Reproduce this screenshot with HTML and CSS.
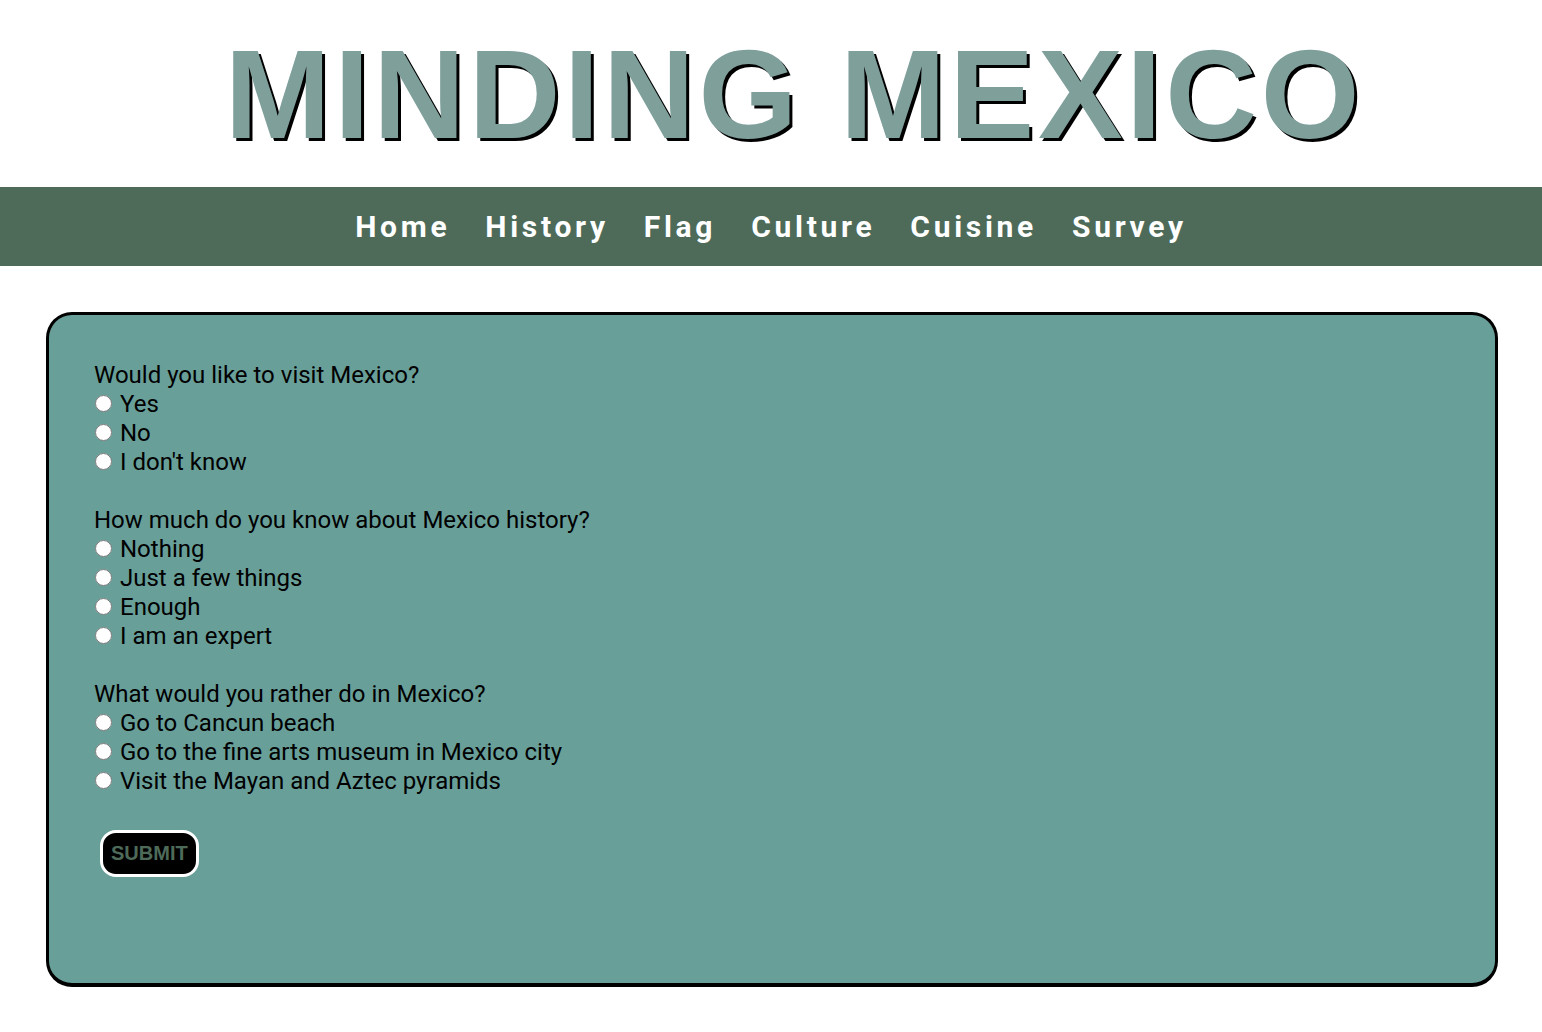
FILE: index.html
```html
<!DOCTYPE html>
<html lang="en">
<head>
<meta charset="utf-8">
<title>Minding Mexico - Survey</title>
<link rel="stylesheet" href="styles.css">
</head>
<body>
<header class="site-header">
  <h1 class="title">MINDING MEXICO</h1>
</header>
<nav class="nav">
  <a href="#">Home</a>
  <a href="#">History</a>
  <a href="#">Flag</a>
  <a href="#">Culture</a>
  <a href="#">Cuisine</a>
  <a href="#">Survey</a>
</nav>
<main class="main">
  <form class="survey">
    <fieldset class="group">
      <div class="question">Would you like to visit Mexico?</div>
      <label class="option"><input type="radio" name="visit"> Yes</label>
      <label class="option"><input type="radio" name="visit"> No</label>
      <label class="option"><input type="radio" name="visit"> I don't know</label>
    </fieldset>
    <fieldset class="group">
      <div class="question">How much do you know about Mexico history?</div>
      <label class="option"><input type="radio" name="hist"> Nothing</label>
      <label class="option"><input type="radio" name="hist"> Just a few things</label>
      <label class="option"><input type="radio" name="hist"> Enough</label>
      <label class="option"><input type="radio" name="hist"> I am an expert</label>
    </fieldset>
    <fieldset class="group">
      <div class="question">What would you rather do in Mexico?</div>
      <label class="option"><input type="radio" name="do"> Go to Cancun beach</label>
      <label class="option"><input type="radio" name="do"> Go to the fine arts museum in Mexico city</label>
      <label class="option"><input type="radio" name="do"> Visit the Mayan and Aztec pyramids</label>
    </fieldset>
    <button type="button" class="submit">SUBMIT</button>
  </form>
</main>
</body>
</html>
```
FILE: styles.css
```css
html, body {
  margin: 0;
  padding: 0;
  background: #ffffff;
}
body {
  font-family: Roboto, "Liberation Sans", sans-serif;
}
.site-header {
  height: 187px;
  display: flex;
  align-items: flex-start;
  justify-content: center;
  padding-left: 46px;
  box-sizing: border-box;
}
.title {
  margin: 22px 0 0;
  font-family: "Liberation Sans", Arial, sans-serif;
  font-weight: 700;
  font-size: 127px;
  line-height: 144px;
  letter-spacing: 3.7px;
  color: #7f9f9b;
  text-shadow: 3px 3px 0 #000;
}
.nav {
  background: #4e6b5a;
  height: 79px;
  display: flex;
  justify-content: center;
  align-items: center;
  gap: 35px;
}
.nav a {
  color: #ffffff;
  text-decoration: none;
  font-family: Roboto, sans-serif;
  font-weight: 700;
  font-size: 30px;
  letter-spacing: 3.7px;
}
.main {
  padding: 46px 44px 46px 46px;
}
.survey {
  background: #699f99;
  border: 3px solid #000;
  border-bottom-width: 4px;
  border-radius: 26px;
  padding: 46px 45px 106px;
  font-size: 24px;
  line-height: 29px;
  color: #000;
}
.group {
  border: 0;
  margin: 0 0 29px;
  padding: 0;
  display: flex;
  flex-direction: column;
}
.option {
  display: flex;
  align-items: center;
}
.option input {
  width: 17px;
  height: 17px;
  margin: 0 8px 3px 1px;
}
.submit {
  margin: 5px 0 0 6px;
  background: #000;
  color: #4e6b5a;
  border: 3px solid #fff;
  border-radius: 16px;
  font-family: "Liberation Sans", Arial, sans-serif;
  font-weight: 700;
  font-size: 20px;
  padding: 9px 8px;
  cursor: pointer;
}
```
